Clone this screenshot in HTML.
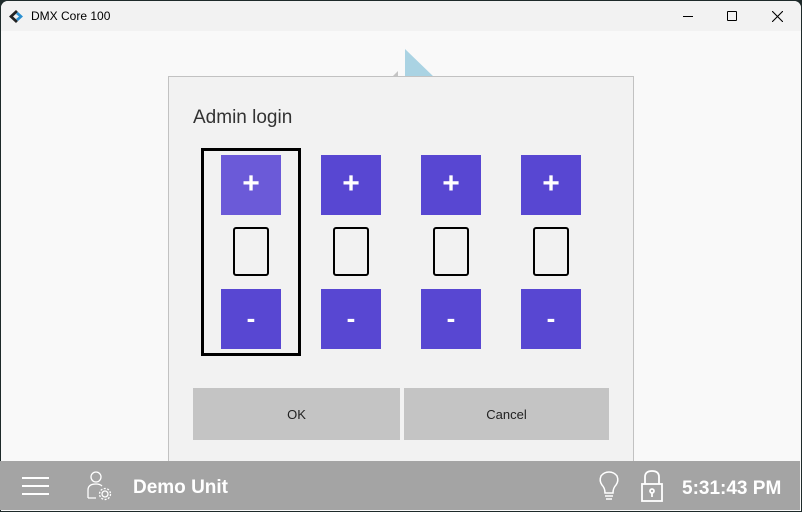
<!DOCTYPE html>
<html><head><meta charset="utf-8"><style>
*{margin:0;padding:0;box-sizing:border-box}
body{width:802px;height:512px;background:#1e2a2a;font-family:"Liberation Sans",sans-serif;position:relative;overflow:hidden}
.win{position:absolute;left:1px;top:1px;width:800px;height:510px;background:#f9f9f9;border-radius:7px 7px 0 0;overflow:hidden}
.title{position:absolute;left:0;top:0;width:800px;height:30px;background:#f2f2f2}
.title span{position:absolute;left:30px;top:8px;font-size:12px;color:#000}
.abs{position:absolute}
.dlg{position:absolute;left:168px;top:76px;width:466px;height:389px;background:#f2f2f2;border:1px solid #c2c2c2}
.btn{position:absolute;width:60px;height:60px;background:#5847d2;color:#fff;font-weight:bold;font-size:26px;text-align:center;line-height:58px}
.pl{font-size:30px}
.box{position:absolute;width:36px;height:49px;border:2px solid #000;border-radius:3px}
.act{position:absolute;top:388px;height:52px;background:#c4c4c4;font-size:13px;text-align:center;line-height:54px;color:#222}
.bar{position:absolute;left:0;top:461px;width:800px;height:49px;background:#a4a4a4}
</style></head><body>
<div class="win">
<div class="title">
<svg class="abs" style="left:8px;top:9px" width="16" height="13" viewBox="0 0 16 13"><path d="M7 0L0 6.5 7 13 9 11 4 6.5 9 2Z" fill="#222"/><path d="M9 2L14 6.5 9 11 7 9 10 6.5 7 4Z" fill="#2a8fd0"/></svg>
<span>DMX Core 100</span>
<div class="abs" style="left:682px;top:15px;width:10px;height:1px;background:#000"></div>
<div class="abs" style="left:726px;top:10px;width:10px;height:10px;border:1px solid #000;border-radius:1px"></div>
<svg class="abs" style="left:771px;top:10px" width="11" height="11"><path d="M0 0L11 11M11 0L0 11" stroke="#000" stroke-width="1.1"/></svg>
</div>
<svg class="abs" style="left:380px;top:47px" width="80" height="30"><path d="M24 1L24 30 54 30Z" fill="#aad3e3"/><path d="M10 30L17 23 17 30Z" fill="#c4c4c4"/></svg>
</div>
<div class="dlg">
<div class="abs" style="left:24px;top:30px;font-size:19px;color:#333">Admin login</div>
<div class="abs" style="left:32px;top:71px;width:100px;height:208px;border:3px solid #000"></div>
<div class="btn pl" style="left:52px;top:78px;background:#6b5ad8">+</div>
<div class="box" style="left:64px;top:150px"></div>
<div class="btn" style="left:52px;top:212px">-</div>
<div class="btn pl" style="left:152px;top:78px">+</div>
<div class="box" style="left:164px;top:150px"></div>
<div class="btn" style="left:152px;top:212px">-</div>
<div class="btn pl" style="left:252px;top:78px">+</div>
<div class="box" style="left:264px;top:150px"></div>
<div class="btn" style="left:252px;top:212px">-</div>
<div class="btn pl" style="left:352px;top:78px">+</div>
<div class="box" style="left:364px;top:150px"></div>
<div class="btn" style="left:352px;top:212px">-</div>
</div>
<div class="act" style="left:193px;width:207px">OK</div>
<div class="act" style="left:404px;width:205px">Cancel</div>
<div class="bar">
<div class="abs" style="left:22px;top:16px;width:27px;height:2px;background:#fff"></div>
<div class="abs" style="left:22px;top:24px;width:27px;height:2px;background:#fff"></div>
<div class="abs" style="left:22px;top:32px;width:27px;height:2px;background:#fff"></div>
<svg class="abs" style="left:86px;top:9px" width="28" height="32" fill="none" stroke="#fff" stroke-width="1.3"><circle cx="10" cy="7" r="5"/><path d="M2 28V20Q2 14 10 14Q14 14 16 16M2 28H10"/><circle cx="19" cy="24" r="3"/><circle cx="19" cy="24" r="5.5" stroke-dasharray="2 1.5"/></svg>
<div class="abs" style="left:133px;top:16px;font-size:19px;font-weight:bold;color:#fff">Demo Unit</div>
<svg class="abs" style="left:597px;top:10px" width="26" height="32" fill="none" stroke="#fff" stroke-width="1.5"><path d="M8 22Q8 17 5 14Q2 10 4 5Q7 1 12 1Q17 1 20 5Q22 10 19 14Q16 17 16 22Z M8 25H16 M9 28H15"/></svg>
<svg class="abs" style="left:640px;top:8px" width="24" height="34" fill="none" stroke="#fff" stroke-width="1.8"><path d="M5 15V8Q5 2 12 2Q19 2 19 8V15"/><rect x="2" y="15" width="20" height="17"/><circle cx="12" cy="22" r="2"/><path d="M12 24V28"/></svg>
<div class="abs" style="left:682px;top:17px;font-size:19px;font-weight:bold;color:#fff">5:31:43 PM</div>
</div>
</body></html>
